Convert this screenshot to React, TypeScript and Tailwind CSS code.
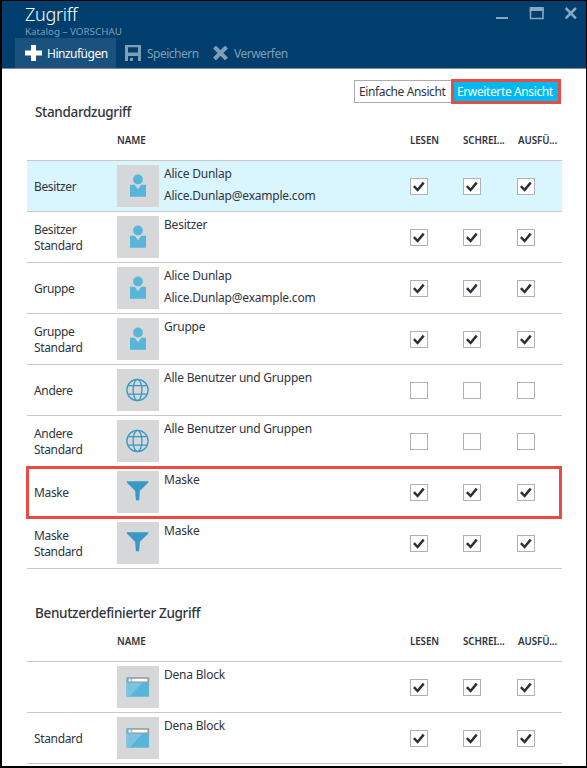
import React from "react";

type Kind = "user" | "globe" | "filter" | "app";

interface Entry {
  label: string;
  icon: Kind;
  name: string;
  mail?: string;
  checked: boolean;
  selected?: boolean;
  marked?: boolean;
}

const standardEntries: Entry[] = [
  { label: "Besitzer", icon: "user", name: "Alice Dunlap", mail: "Alice.Dunlap@example.com", checked: true, selected: true },
  { label: "Besitzer Standard", icon: "user", name: "Besitzer", checked: true },
  { label: "Gruppe", icon: "user", name: "Alice Dunlap", mail: "Alice.Dunlap@example.com", checked: true },
  { label: "Gruppe Standard", icon: "user", name: "Gruppe", checked: true },
  { label: "Andere", icon: "globe", name: "Alle Benutzer und Gruppen", checked: false },
  { label: "Andere Standard", icon: "globe", name: "Alle Benutzer und Gruppen", checked: false },
  { label: "Maske", icon: "filter", name: "Maske", checked: true, marked: true },
  { label: "Maske Standard", icon: "filter", name: "Maske", checked: true },
];

const customEntries: Entry[] = [
  { label: "", icon: "app", name: "Dena Block", checked: true },
  { label: "Standard", icon: "app", name: "Dena Block", checked: true },
];

function TileIcon({ kind }: { kind: Kind }) {
  return (
    <svg width="42" height="42" viewBox="0 0 42 42" className="block">
      {kind === "user" && (
        <g fill="#59b4d9">
          <circle cx="21" cy="14.5" r="4.9" />
          <path d="M13 19.800h4.800L21 24.300 24.200 19.800H29v12H13z" />
        </g>
      )}
      {kind === "globe" && (
        <g fill="none" stroke="#3999c6" strokeWidth="1.3">
          <circle cx="20.5" cy="21" r="10.6" />
          <ellipse cx="20.5" cy="21" rx="4.4" ry="10.6" />
          <path d="M11 16.7h19M11 25.1h19" />
        </g>
      )}
      {kind === "filter" && (
        <path d="M9.800 10.200h21.600v1.300L22.900 19.700l-.8 9.500h-3.200l-.8-9.500L9.800 11.500z" fill="#3999c6" />
      )}
      {kind === "app" && (
        <g>
          <rect x="9.500" y="11.200" width="22.600" height="19.500" rx="1" fill="#59b4d9" />
          <path d="M9.500 16.600h16L12.500 30.700h-2a1 1 0 0 1-1-1z" fill="#7ac3e1" />
          <path d="M10.500 11.200h20.600a1 1 0 0 1 1 1v4.600H9.500v-4.600a1 1 0 0 1 1-1z" fill="#a0a1a2" />
          <rect x="14.500" y="12.800" width="15.800" height="2.600" fill="#fff" />
          <circle cx="12.900" cy="14.100" r="2.300" fill="#59b4d9" />
          <path d="M12.900 12.300v3.600M11.100 14.100h3.600" stroke="#fff" strokeWidth="1" />
        </g>
      )}
    </svg>
  );
}

function Check({ on }: { on: boolean }) {
  return (
    <span className="mt-px block h-[17px] w-[18px] border border-[#b0b1b8] bg-white">
      {on && (
        <svg width="16" height="15" viewBox="0 0 16 15" className="block">
          <path d="M2.900 7.200L6.600 11 12.700 3.600" fill="none" stroke="#2b2f38" strokeWidth="2.500" />
        </svg>
      )}
    </span>
  );
}

const columns = "grid grid-cols-[90px_47px_246px_53px_54px_45px]";

function TableHead() {
  return (
    <div className={`${columns} pt-px text-[9.8px] leading-3 font-semibold tracking-[-0.1px]`}>
      <span />
      <span className="col-span-2">NAME</span>
      <span>LESEN</span>
      <span>SCHREI...</span>
      <span className="pl-px">AUSFÜ...</span>
    </div>
  );
}

function Row({ entry }: { entry: Entry }) {
  return (
    <div
      className={`${columns} relative h-[51px] items-center border-b border-[#c6c8ca] text-[12px] tracking-[-0.22px] ${
        entry.selected ? "bg-[#d9f5fe]" : ""
      }`}
    >
      <span className="mt-[2px] w-[70px] pl-[7px] leading-4 tracking-[-0.35px]">{entry.label}</span>
      <span className="h-[42px] w-[42px] bg-[#d5d7d9]">
        <TileIcon kind={entry.icon} />
      </span>
      <span className="self-start pt-[2px] leading-[21.5px]">
        <span className="block">{entry.name}</span>
        {entry.mail && <span className="block">{entry.mail}</span>}
      </span>
      <Check on={entry.checked} />
      <Check on={entry.checked} />
      <Check on={entry.checked} />
      {entry.marked && (
        <span className="absolute -top-[1px] right-0 -bottom-[2px] -left-px border-3 border-[#ec4b44]" />
      )}
    </div>
  );
}

function Section({ entries }: { entries: Entry[] }) {
  return (
    <div className="mt-[13px] border-t border-[#c6c8ca]">
      {entries.map((entry, i) => (
        <Row key={i} entry={entry} />
      ))}
    </div>
  );
}

export default function App() {
  return (
    <div className="flex h-[768px] w-[587px] flex-col overflow-hidden border border-b-2 border-l-2 border-black bg-white font-['Noto_Sans',sans-serif] text-[#30343c]">
      <header className="flex h-[68px] flex-none flex-col border-b border-[#7f8a94] bg-[#003e6e]">
        <div className="flex h-[37px] justify-between">
          <div className="relative z-10 pl-[23px]">
            <h1 className="mt-[1px] text-[18px] leading-[24px] font-light tracking-[-0.3px] text-white">Zugriff</h1>
            <p className="text-[9.8px] leading-[11px] text-[#7f9eb6]">Katalog – VORSCHAU</p>
          </div>
          <svg width="90" height="30" viewBox="496 1 90 30" fill="none" stroke="#8aa7bd">
            <path d="M496 18h12" strokeWidth="2" />
            <path d="M530.500 9.500h12.500v9h-12.500z" strokeWidth="1.600" />
            <path d="M529.700 9h14.100" strokeWidth="4" />
            <path d="M565.700 8l10.200 10.400M575.900 8l-10.200 10.400" strokeWidth="2.600" />
          </svg>
        </div>
        <div className="flex h-[30px] pl-[13px] text-[12px] tracking-[-0.5px] text-[#7f9eb6]">
          <div className="flex h-full w-[101px] items-center bg-[#1a517d] pl-[10px] text-white">
            <svg width="17" height="16" viewBox="0 0 17 16" fill="currentColor">
              <path d="M6 0h5v5.500h6v5h-6V16H6v-5.500H0v-5h6z" />
            </svg>
            <span className="mt-px ml-[5px]">Hinzufügen</span>
          </div>
          <div className="flex h-full w-[97px] items-center pl-[9px]">
            <svg width="16" height="16" viewBox="0 0 16 16" fill="currentColor">
              <path fillRule="evenodd" d="M0 0h16v16h-3v-5H3v5H0zM3 2.200V7.500h10V2.200z" />
              <path d="M5 13h3v3H5z" />
            </svg>
            <span className="mt-px ml-[6px]">Speichern</span>
          </div>
          <div className="flex h-full items-center">
            <svg width="15" height="14" viewBox="0 0 15 14" fill="none" stroke="currentColor" strokeWidth="4">
              <path d="M1.500 1l12 12M13.500 1l-12 12" />
            </svg>
            <span className="mt-px ml-[6px]">Verwerfen</span>
          </div>
        </div>
      </header>

      <main className="flex flex-col pr-[24px] pl-[25px]">
        <div className="mt-[10px] mr-px flex h-[25px] items-center justify-end text-[12px] leading-[18px] tracking-[-0.38px]">
          <div className="flex h-[23px] w-[97px] items-center border border-r-0 border-[#a9aab3] pl-1 whitespace-nowrap">
            Einfache Ansicht
          </div>
          <div className="flex h-[25px] w-[110px] items-center border-3 border-[#ec4b44] bg-[#00b9f2] pl-[3px] whitespace-nowrap text-white">
            Erweiterte Ansicht
          </div>
        </div>
        <h2 className="-mt-px mb-[13px] pl-[8px] text-[13.5px] leading-[18px] font-medium tracking-[-0.33px]">
          Standardzugriff
        </h2>
        <TableHead />
        <Section entries={standardEntries} />
        <h2 className="mt-[35px] mb-[13px] pl-[8px] text-[13.5px] leading-[18px] font-medium tracking-[-0.33px]">
          Benutzerdefinierter Zugriff
        </h2>
        <TableHead />
        <Section entries={customEntries} />
      </main>
    </div>
  );
}
